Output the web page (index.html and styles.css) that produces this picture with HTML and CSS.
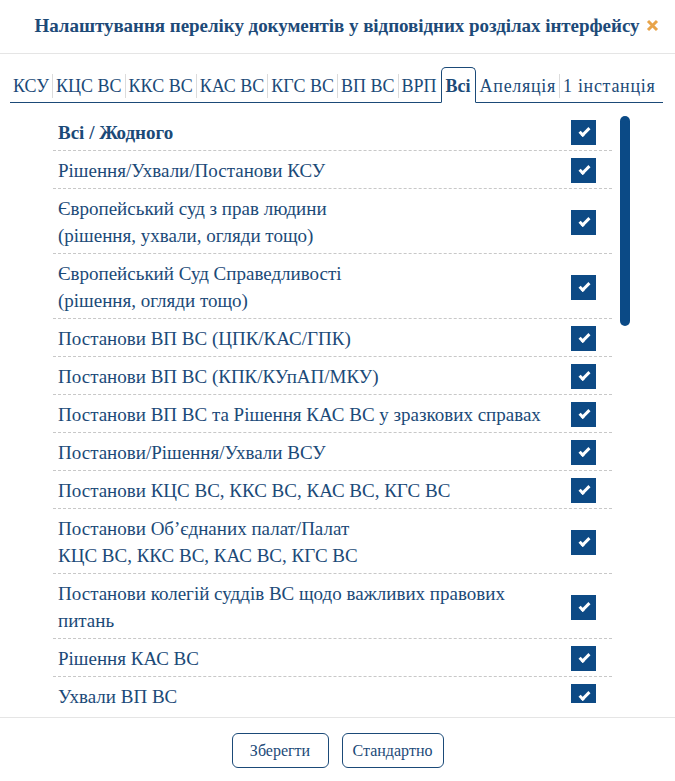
FILE: index.html
```html
<!DOCTYPE html>
<html lang="uk">
<head>
<meta charset="utf-8">
<title>Налаштування</title>
<link rel="stylesheet" href="styles.css">
</head>
<body>
<div class="modal">
  <div class="header">
    <h1 class="title">Налаштування переліку документів у відповідних розділах інтерфейсу</h1>
    <svg class="close" width="13" height="13" viewBox="0 0 13 13"><path d="M2 2 L11 11 M11 2 L2 11" stroke="#e8a44a" stroke-width="3" stroke-linecap="butt"/></svg>
  </div>
  <div class="tabs">
    <span class="tab">КСУ</span>
    <span class="tab sep">КЦС ВС</span>
    <span class="tab sep">ККС ВС</span>
    <span class="tab sep">КАС ВС</span>
    <span class="tab sep">КГС ВС</span>
    <span class="tab sep">ВП ВС</span>
    <span class="tab sep">ВРП</span>
    <span class="tab active">Всі</span>
    <span class="tab wide">Апеляція</span>
    <span class="tab sep wide">1 інстанція</span>
  </div>
  <div class="body">
    <div class="list">
      <div class="row all"><span class="label">Всі / Жодного</span><span class="cb"></span></div>
      <div class="row"><span class="label">Рішення/Ухвали/Постанови КСУ</span><span class="cb"></span></div>
      <div class="row"><span class="label">Європейський суд з прав людини<br>(рішення, ухвали, огляди тощо)</span><span class="cb"></span></div>
      <div class="row"><span class="label">Європейський Суд Справедливості<br>(рішення, огляди тощо)</span><span class="cb"></span></div>
      <div class="row"><span class="label">Постанови ВП ВС (ЦПК/КАС/ГПК)</span><span class="cb"></span></div>
      <div class="row"><span class="label">Постанови ВП ВС (КПК/КУпАП/МКУ)</span><span class="cb"></span></div>
      <div class="row"><span class="label">Постанови ВП ВС та Рішення КАС ВС у зразкових справах</span><span class="cb"></span></div>
      <div class="row"><span class="label">Постанови/Рішення/Ухвали ВСУ</span><span class="cb"></span></div>
      <div class="row"><span class="label">Постанови КЦС ВС, ККС ВС, КАС ВС, КГС ВС</span><span class="cb"></span></div>
      <div class="row"><span class="label">Постанови Об’єднаних палат/Палат<br>КЦС ВС, ККС ВС, КАС ВС, КГС ВС</span><span class="cb"></span></div>
      <div class="row"><span class="label">Постанови колегій суддів ВС щодо важливих правових<br>питань</span><span class="cb"></span></div>
      <div class="row"><span class="label">Рішення КАС ВС</span><span class="cb"></span></div>
      <div class="row"><span class="label">Ухвали ВП ВС</span><span class="cb"></span></div>
      <div class="row"><span class="label">Ухвали КЦС ВС</span><span class="cb"></span></div>
    </div>
    <div class="track"><div class="thumb"></div></div>
  </div>
  <div class="footer">
    <button class="btn btn-save">Зберегти</button>
    <button class="btn btn-default">Стандартно</button>
  </div>
</div>
</body>
</html>
```

FILE: styles.css
```css
html, body {
  margin: 0;
  padding: 0;
  background: #fff;
}
body {
  font-family: "Liberation Serif", "DejaVu Serif", serif;
  color: #1b4a78;
}
.modal {
  width: 675px;
  height: 781px;
  display: flex;
  flex-direction: column;
}
.header {
  height: 54px;
  border-bottom: 1px solid #e5e5e5;
  display: flex;
  align-items: center;
  justify-content: center;
  gap: 7px;
  padding-left: 19px;
  padding-bottom: 2px;
  box-sizing: border-box;
  flex: none;
}
.title {
  margin: 0;
  font-size: 19px;
  font-weight: bold;
  color: #1d4a78;
  letter-spacing: -0.05px;
}
.close {
  display: block;
  flex: none;
}
.tabs {
  margin: 15px 12px 0 10px;
  display: flex;
  align-items: flex-end;
  border-bottom: 1px solid #1b4a78;
  height: 33px;
  flex: none;
}
.tab {
  font-size: 18px;
  line-height: 24px;
  padding: 0 3px;
  margin-bottom: 4px;
  color: #1b4a78;
  white-space: nowrap;
}
.tab.sep {
  border-left: 1px solid #dcdcdc;
}
.tab.wide {
  letter-spacing: 0.7px;
}
.tab.active {
  font-weight: bold;
  border: 1px solid #1b4a78;
  border-bottom: 1px solid #fff;
  border-radius: 5px 5px 0 0;
  margin-bottom: -1px;
  padding: 6px 4px 4px;
  margin-left: 1px;
  margin-right: 1px;
}
.body {
  display: flex;
  height: 600px;
  overflow: hidden;
  padding-left: 53px;
  padding-top: 10px;
  box-sizing: border-box;
  flex: none;
}
.list {
  width: 559px;
}
.row {
  display: flex;
  align-items: center;
  justify-content: space-between;
  padding: 6px 16px 4px 5px;
  border-bottom: 1px dashed #c8c8c8;
  font-size: 19px;
  line-height: 27px;
}
.row.all {
  font-weight: bold;
}
.cb {
  width: 25px;
  height: 25px;
  background: #0d4a85;
  flex: none;
  position: relative;
}
.cb::after {
  content: "";
  position: absolute;
  left: 8px;
  top: 8px;
  width: 8px;
  height: 3px;
  border-left: 3px solid #fff;
  border-bottom: 3px solid #fff;
  transform: rotate(-45deg);
}
.track {
  width: 10px;
  margin-left: 8px;
  padding-top: 3px;
}
.thumb {
  width: 10px;
  height: 210px;
  background: #0b4a86;
  border-radius: 5px;
}
.footer {
  border-top: 1px solid #e5e5e5;
  margin-top: 14px;
  display: flex;
  justify-content: center;
  gap: 13px;
  padding-top: 15px;
  flex: none;
}
.btn {
  font-family: "Liberation Serif", "DejaVu Serif", serif;
  font-size: 16px;
  color: #1b4a78;
  background: #fff;
  border: 1px solid #1b4a78;
  border-radius: 6px;
  height: 35px;
  padding: 0;
}
.btn-save {
  width: 97px;
}
.btn-default {
  width: 102px;
}
```
